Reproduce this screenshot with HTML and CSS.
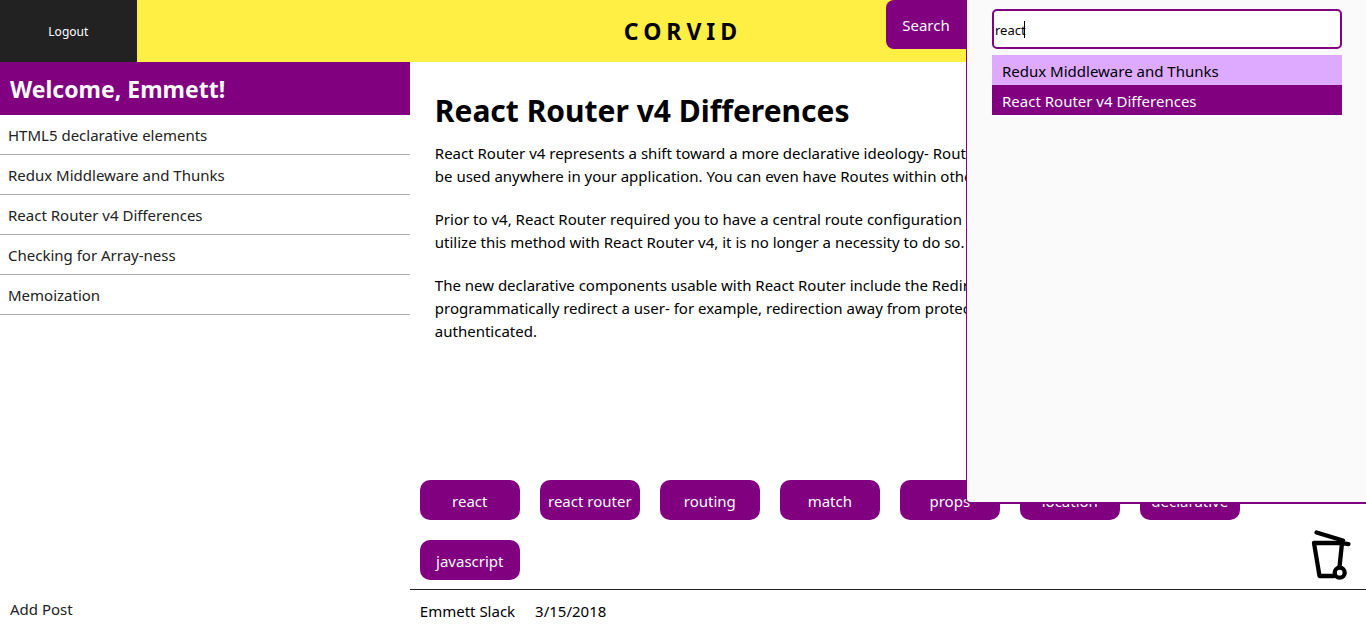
FILE: index.html
```html
<!DOCTYPE html>
<html lang="en">
<head>
<meta charset="utf-8">
<title>Corvid</title>
<link rel="stylesheet" href="styles.css">
</head>
<body>
<header class="topbar">
  <button class="logout" type="button">Logout</button>
  <h1 class="brand">CORVID</h1>
</header>
<div class="layout">
  <aside class="sidebar">
    <h2 class="welcome">Welcome, Emmett!</h2>
    <nav class="posts">
      <a class="post-link" href="#">HTML5 declarative elements</a>
      <a class="post-link" href="#">Redux Middleware and Thunks</a>
      <a class="post-link" href="#">React Router v4 Differences</a>
      <a class="post-link" href="#">Checking for Array-ness</a>
      <a class="post-link" href="#">Memoization</a>
    </nav>
    <a class="add-post" href="#">Add Post</a>
  </aside>
  <main class="content">
    <article class="post">
      <h2 class="post-title">React Router v4 Differences</h2>
      <p>React Router v4 represents a shift toward a more declarative ideology- Routes are now components that can<br>be used anywhere in your application. You can even have Routes within other Routes.</p>
      <p>Prior to v4, React Router required you to have a central route configuration file. While you can still<br>utilize this method with React Router v4, it is no longer a necessity to do so.</p>
      <p>The new declarative components usable with React Router include the Redirect, which is used to<br>programmatically redirect a user- for example, redirection away from protected routes when not<br>authenticated.</p>
    </article>
    <div class="tag-row">
      <ul class="tags">
        <li class="tag">react</li>
        <li class="tag">react router</li>
        <li class="tag">routing</li>
        <li class="tag">match</li>
        <li class="tag">props</li>
        <li class="tag">location</li>
        <li class="tag">declarative</li>
        <li class="tag">javascript</li>
      </ul>
      <button class="delete" type="button" aria-label="Delete post">
        <svg width="40" height="50" viewBox="0 0 40 50" fill="none" stroke="#000" stroke-width="4.300" stroke-linecap="round" stroke-linejoin="round">
          <path d="M5.500 2.500L32 10.500"/>
          <path d="M37.500 14L31 13H3L8.500 46H23"/>
          <path d="M31 13L28.500 37"/>
          <circle cx="28.700" cy="42.700" r="5"/>
        </svg>
      </button>
    </div>
    <footer class="meta"><span>Emmett Slack</span><span>3/15/2018</span></footer>
  </main>
</div>
<section class="search">
  <button class="search-tab" type="button">Search</button>
  <div class="search-panel">
    <div class="field">
      <input class="search-input" type="text" value="react" aria-label="Search posts">
      <span class="caret"></span>
    </div>
    <div class="results">
      <a class="result" href="#">Redux Middleware and Thunks</a>
      <a class="result result-active" href="#">React Router v4 Differences</a>
    </div>
  </div>
</section>
</body>
</html>
```
FILE: styles.css
```css
* { box-sizing: border-box; }
body {
  margin: 0;
  min-height: 100vh;
  display: flex;
  flex-direction: column;
  position: relative;
  overflow-x: hidden;
  background: #fff;
  color: #000;
  font: 15px/23px "Noto Sans", "Open Sans", sans-serif;
}
a { color: inherit; text-decoration: none; }
button, input { font-family: inherit; border: 0; }
.topbar {
  display: grid;
  grid-template-columns: 10% 1fr 10%;
  height: 62px;
  background: #ffee44;
}
.logout { background: #222; color: #fff; font-size: 12px; }
.brand {
  margin: 0;
  align-self: center;
  text-align: center;
  font-size: 23px;
  line-height: 32px;
  letter-spacing: 5px;
}
.layout { flex: 1; display: grid; grid-template-columns: 3fr 7fr; }
.sidebar { display: flex; flex-direction: column; color: #222; }
.welcome {
  margin: 0;
  padding: 11px 10px 9px;
  background: #800080;
  color: #fafafa;
  font-size: 23px;
  line-height: 33px;
}
.posts { display: flex; flex-direction: column; }
.post-link { padding: 9px 8px 7px; border-bottom: 1px solid #aaa; }
.add-post { margin-top: auto; padding: 9px 10px; }
.content { display: flex; flex-direction: column; min-width: 0; }
.post { flex: 1; padding: 25px 25px 0; white-space: nowrap; overflow: hidden; }
.post-title { margin: 0 0 8px; font-size: 30px; line-height: 47px; }
.post p { margin: 0 0 20px; }
.tag-row { display: flex; align-items: flex-end; padding-right: 15px; }
.tags {
  flex: 1;
  display: flex;
  flex-wrap: wrap;
  gap: 20px;
  margin: 0;
  padding: 10px 10px 9px;
  list-style: none;
}
.tag {
  width: 100px;
  padding: 11px 0 9px;
  line-height: 20px;
  border-radius: 10px;
  background: #800080;
  color: #fafafa;
  text-align: center;
}
.delete { padding: 0 0 9px; background: none; line-height: 0; }
.meta {
  display: flex;
  gap: 20px;
  padding: 10px 10px 7px;
  border-top: 1px solid #222;
}
.search { position: absolute; top: 0; right: 0; display: flex; align-items: flex-start; }
.search-tab {
  width: 80px;
  height: 49px;
  border-radius: 8px 0 0 8px;
  background: #800080;
  color: #fafafa;
  font-size: 15px;
}
.search-panel {
  width: 400px;
  height: 80vh;
  padding: 9px 24px 0 25px;
  border-left: 1px solid #800080;
  border-bottom: 2px solid #800080;
  border-bottom-left-radius: 5px;
  background: #fafafa;
}
.field { position: relative; display: flex; }
.search-input {
  width: 100%;
  height: 40px;
  padding: 2px 1px 0;
  border: 2px solid #800080;
  border-radius: 5px;
  outline: 0;
  background: #fff;
  color: #000;
  font-size: 13px;
}
.caret {
  position: absolute;
  left: 32px;
  top: 12px;
  width: 1px;
  height: 17px;
  background: #000;
}
.search-input:focus + .caret { display: none; }
.results { display: flex; flex-direction: column; margin-top: 6px; }
.result { padding: 5px 10px 2px; background: #ddaaff; }
.result-active { background: #800080; color: #fafafa; }
```
